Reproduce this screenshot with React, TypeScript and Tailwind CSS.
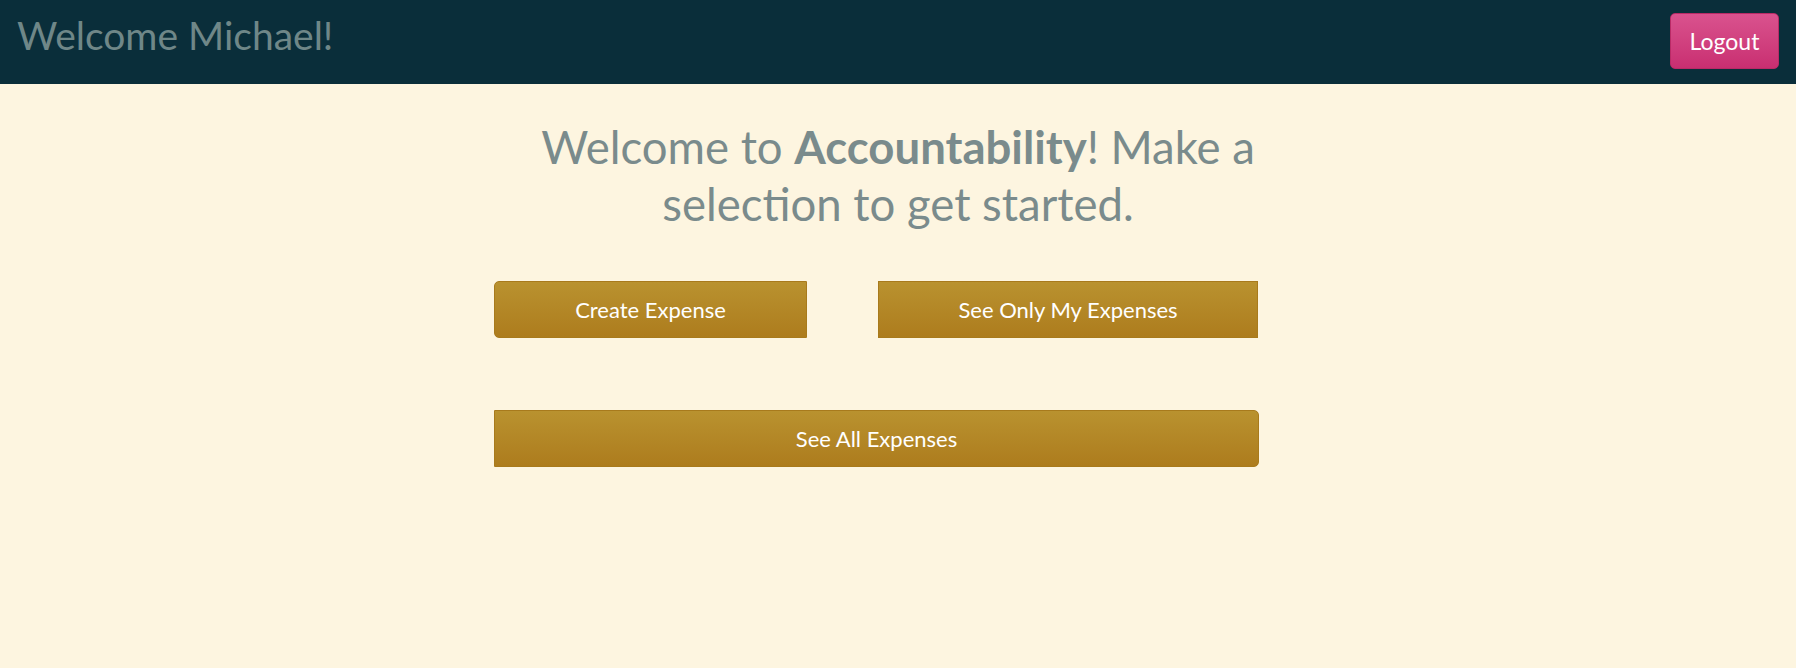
import React from "react";

const btn =
  "h-[57px] flex items-center justify-center text-white text-[22px] bg-gradient-to-b from-[#b9922f] to-[#ad7c1d] border border-[#a87a1c] [font-family:Lato,'Open_Sans',sans-serif]";

export default function App() {
  return (
    <div className="min-h-[668px] bg-[#fdf5e0] [font-family:Lato,'Open_Sans',sans-serif]">
      <header className="h-[84px] bg-[#0a2e3a] flex justify-between items-start px-[17px]">
        <div className="text-[39px] leading-none text-[#6f8788] mt-[16px]">Welcome Michael!</div>
        <button className="mt-[13px] w-[109px] h-[56px] rounded-[5px] bg-gradient-to-b from-[#d9528e] to-[#c92e71] border border-[#b92a66] text-white text-[23px]">
          Logout
        </button>
      </header>
      <main className="flex flex-col items-center">
        <h1 className="mt-[34px] w-[740px] text-center text-[45.5px] leading-[57px] text-[#7a8b8c]">
          Welcome to <span className="font-bold">Accountability</span>! Make a selection to get started.
        </h1>
        <div className="w-[808px] mt-[49px] pr-[44px]">
          <div className="flex justify-between">
            <button className={`${btn} w-[313px] rounded-l-[5px]`}>Create Expense</button>
            <button className={`${btn} w-[380px]`}>See Only My Expenses</button>
          </div>
          <button className={`${btn} w-[765px] mt-[72px] rounded-r-[5px]`}>See All Expenses</button>
        </div>
      </main>
    </div>
  );
}
